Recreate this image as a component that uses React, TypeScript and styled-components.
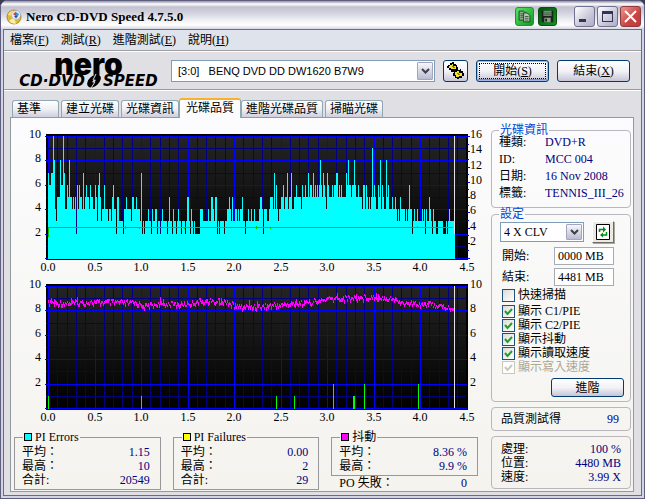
import React, { useState } from "react";

import styled, { createGlobalStyle, css } from "styled-components";

// one hex digit per plot column, keyed by the column each run starts at
const PI_ERRORS: [number, string][] = [
  [0, "76677A843555866A744658554"],
  [25, "545264655474565546554465367534464443443564425533332445444435544544437"],
  [94, "2323334332433442"],
  [110, "332343333235"],
  [122, "33243323433233323"],
  [139, "553243232"],
  [148, "222244433333433554355"],
  [169, "2323333233445435"],
  [185, "3344343445332"],
  [198, "3343343343333455424443345554"],
  [226, "746434455645574557"],
  [244, "4455655554655655756657"],
  [266, "565656865765476555656677"],
  [290, "56565555768665668655655546646545459"],
  [325, "5654465846544856444544543435444434346442"],
  [365, "34334333343424335432433223333322232343333"],
];

const PI_FAILURES = [
  { x: 37, value: 1 },
  { x: 130, value: 1 },
  { x: 265, value: 1 },
  { x: 283, value: 1 },
  { x: 322, value: 2 },
  { x: 342, value: 1 },
  { x: 343, value: 1 },
  { x: 353, value: 2 },
  { x: 407, value: 2 },
];

// [column, height in plot pixels], interpolated between the entries
const JITTER_LEVELS = [
  [0, 30], [20, 30], [60, 29], [90, 30], [97, 33], [110, 31], [140, 31], [150, 28], [180, 29], [187, 34],
  [215, 33], [240, 31], [265, 29], [280, 26], [300, 25], [325, 24], [342, 25], [355, 30], [380, 31],
  [395, 34], [410, 37],
];

const LEFT = 37;
const TOP = 13;
const BOTTOM = 135;
const COLUMNS = 407;

const jitterAt = (x: number) => {
  const next = JITTER_LEVELS.findIndex(([px]) => px >= x);
  if (next <= 0) return JITTER_LEVELS[0][1];
  const [x0, y0] = JITTER_LEVELS[next - 1];
  const [x1, y1] = JITTER_LEVELS[next];
  return y0 + ((y1 - y0) * (x - x0)) / (x1 - x0);
};

const noise = (n: number) => {
  const v = Math.sin(n * 12.9898) * 43758.5453;
  return v - Math.floor(v);
};

const xAt = (v: number) => LEFT + Math.round(v * 93);
const yAt = (v: number) => Math.round(BOTTOM - v * 12.2);

const errorsPath = () => {
  const values: string[] = new Array(COLUMNS).fill("3");
  PI_ERRORS.forEach(([start, run]) => {
    run.split("").forEach((digit, i) => {
      if (start + i < COLUMNS) values[start + i] = digit;
    });
  });
  const bars = values.map((digit, i) => `V${yAt(parseInt(digit, 16))}H${LEFT + i + 1}`);
  return `M${LEFT} ${BOTTOM + 1}${bars.join("")}V${BOTTOM + 1}Z`;
};

const jitterPath = () => {
  let d = "";
  for (let i = 0; i < COLUMNS; i++) {
    const spike = noise(i + 7) > 0.95 ? 4 : 0;
    const y = Math.round(jitterAt(i) - 1 + (noise(i) - 0.5) * 5) - spike;
    const height = 2 + Math.floor(noise(i + 500) * 3) + spike;
    d += `M${LEFT + i} ${y}h1v${height}h-1z`;
  }
  return d;
};

const PlotGrid = ({ id }: { id: string }) => (
  <>
    <defs>
      <linearGradient id={id} x1="0" y1="0" x2="0" y2="1">
        <stop offset="0" stopColor="#242424" />
        <stop offset="1" stopColor="#000" />
      </linearGradient>
    </defs>
    <rect x={35} y={11} width={422} height={126} fill="#000" />
    <rect x={37} y={14} width={418} height={121} fill={`url(#${id})`} />
    {Array.from({ length: 45 }, (_, i) => (
      <rect key={i} x={xAt(i / 10)} y={TOP} width={1} height={122} fill={i % 5 ? "#000080" : "#0000ff"} />
    ))}
    {Array.from({ length: 11 }, (_, i) => (
      <rect key={i} x={i % 2 ? 35 : 34} y={yAt(i)} width={i % 2 ? 420 : 422} height={1} fill={i % 2 ? "#000080" : "#0000ff"} />
    ))}
  </>
);

const AxisLabels = ({ rightMax }: { rightMax: number }) => (
  <g>
    {[2, 4, 6, 8, 10].map((v) => (
      <text key={v} x={30} y={yAt(v) + 2} textAnchor="end">{v}</text>
    ))}
    {Array.from({ length: rightMax / 2 }, (_, i) => (i + 1) * 2).map((v) => (
      <text key={v} x={459} y={yAt((v * 10) / rightMax) + 2}>{v}</text>
    ))}
    {Array.from({ length: 10 }, (_, i) => i / 2).map((v) => (
      <text key={v} x={xAt(v)} y={148} textAnchor="middle">{v.toFixed(1)}</text>
    ))}
  </g>
);

const ErrorsChart = () => (
  <Chart viewBox="0 0 476 150" role="img" aria-label="PI Errors">
    <PlotGrid id="errors-bg" />
    <path d={errorsPath()} fill="#00ffff" />
    {Array.from({ length: 17 }, (_, i) => (
      <rect key={i} x={456} y={Math.round(BOTTOM - i * 7.625)} width={i % 2 ? 2 : 3} height={1} fill="#0000ff" />
    ))}
    <path d="M37 104h405v1h-405zM37 104h1v10h-1zM114 103h1v3h-1zM128 104h1v2h-1zM173 104h1v2h-1zM245 103h1v3h-1zM259 104h1v2h-1zM406 103h1v2h-1z" fill="#00c800" />
    <rect x={443} y={13} width={1} height={98} fill="#e0dfe3" />
    <AxisLabels rightMax={16} />
  </Chart>
);

const JitterChart = () => (
  <Chart viewBox="0 0 476 150" role="img" aria-label="抖動">
    <PlotGrid id="jitter-bg" />
    {PI_FAILURES.map(({ x, value }) => (
      <rect key={x} x={x} y={yAt(value)} width={1} height={BOTTOM - yAt(value) + 1} fill="#00ff00" />
    ))}
    <path d={jitterPath()} fill="#ff00ff" />
    <rect x={443} y={13} width={1} height={122} fill="#e0dfe3" />
    <AxisLabels rightMax={10} />
  </Chart>
);

const DiscIcon = () => (
  <svg width="16" height="16" viewBox="0 0 16 16" aria-hidden="true">
    <circle cx="8" cy="8" r="7" fill="#dcbb3c" stroke="#a98a20" />
    <path d="M2 6a7 7 0 0 1 5-4.500l2 6z" fill="#f3e08a" />
    <path d="M3 12a7 7 0 0 0 7 2.500l-2-6z" fill="#fbeeaa" />
    <circle cx="10" cy="6" r="4.500" fill="#e6edf6" stroke="#9aa4b4" strokeWidth=".5" />
    <path d="M7 5l3-2.500V6H8z" fill="#d84032" />
    <path d="M10 3l3 2-1 2-2-1z" fill="#3d8fd8" />
    <path d="M8 7l2-1 2 1-2 2.500z" fill="#2a4fae" />
  </svg>
);

const CopyIcon = () => (
  <svg width="19" height="19" viewBox="0 0 19 19" aria-hidden="true">
    <path d="M3.500 3.500h5l2 2v8h-7z" fill="#8fae93" stroke="#173f1b" />
    <path d="M8.500 5.500h4l3 3v7h-7z" fill="#b4c4b5" stroke="#173f1b" />
    <path d="M5 6.500h3M5 8.500h3M5 10.500h3M10 9.500h4M10 11.500h4M10 13.500h4" stroke="#3b5a3e" />
  </svg>
);

const SaveIcon = () => (
  <svg width="19" height="19" viewBox="0 0 19 19" aria-hidden="true">
    <path d="M3 3h13v13H4l-1-1z" fill="#1d221d" />
    <path d="M5 3h9v6H5z" fill="#719173" />
    <path d="M6 11h7v5H6z" fill="#8ba38d" />
    <path d="M7 12h2v3H7z" fill="#1d221d" />
    <path d="M5 5.500h9M5 7.500h9" stroke="#456048" />
  </svg>
);

const OptionsIcon = () => (
  <svg width="17" height="17" viewBox="0 0 17 17" shapeRendering="crispEdges" aria-hidden="true">
    <path d="M1 3h2V1h2V0h2v2h2v1h1v2h1v3H9v2H4V8H2V6H0V4h1z" fill="#000" />
    <path d="M3 3h2V2h1v2h3v3H4V6H2V4h1z" fill="#f4e623" />
    <path d="M7 9h2V7h2v1h2V7h1v2h2v2h1v3h-2v2h-3v1h-2v-1H8v-2H6v-3h1z" fill="#000" />
    <path d="M8 10h2V9h2v2h3v3h-3v1H9v-2H8z" fill="#f4e623" />
    <path d="M5 4h2v1h1v1H6V5H5zM10 11h2v1h1v1h-2v-1h-1z" fill="#877a00" />
  </svg>
);

const RefreshIcon = () => (
  <svg width="14" height="16" viewBox="0 0 14 16" aria-hidden="true">
    <path d="M.5.500h13v15H.5z" fill="#fff" stroke="#000" />
    <path d="M3.500 8V5.500h4M10.500 8v3h-4" fill="none" stroke="#008a16" strokeWidth="1.500" />
    <path d="M7 2.500l3 3-3 3zM7 8.500l-3 2.500 3 2.500z" fill="#008a16" />
  </svg>
);

const LogoDisc = () => (
  <svg width="18" height="14" viewBox="0 0 18 14" aria-hidden="true">
    <ellipse cx="9" cy="7" rx="8" ry="5" transform="rotate(-42 9 7)" fill="#000" />
    <ellipse cx="9" cy="7" rx="2" ry="1" transform="rotate(-42 9 7)" fill="#e0dfe3" />
    <path d="M11 0L8 6M10 8l-4 6" stroke="#e0dfe3" />
  </svg>
);

const Arrow = () => (
  <svg width="9" height="6" viewBox="0 0 9 6" aria-hidden="true">
    <path d="M1 1l3.500 3.500L8 1" fill="none" stroke="#3a3f4c" strokeWidth="2" />
  </svg>
);

const MENU = [
  ["檔案", "F"],
  ["測試", "R"],
  ["進階測試", "E"],
  ["說明", "H"],
];

const TABS = ["基準", "建立光碟", "光碟資訊", "光碟品質", "進階光碟品質", "掃瞄光碟"];

const DISC_INFO = [
  ["種類:", "DVD+R"],
  ["ID:", "MCC 004"],
  ["日期:", "16 Nov 2008"],
  ["標籤:", "TENNIS_III_26"],
];

const OPTIONS = [
  { label: "快速掃描", checked: false },
  { label: "顯示 C1/PIE", checked: true },
  { label: "顯示 C2/PIE", checked: true },
  { label: "顯示抖動", checked: true },
  { label: "顯示讀取速度", checked: true },
  { label: "顯示寫入速度", checked: true, disabled: true },
];

const STATS = [
  { title: "PI Errors", color: "#00ffff", rows: [["平均：", "1.15"], ["最高：", "10"], ["合計:", "20549"]] },
  { title: "PI Failures", color: "#ffff00", rows: [["平均：", "0.00"], ["最高：", "2"], ["合計:", "29"]] },
  { title: "抖動", color: "#ff00ff", rows: [["平均：", "8.36 %"], ["最高：", "9.9 %"]], extra: ["PO 失敗：", "0"] },
];

const PROGRESS = [
  ["處理:", "100 %"],
  ["位置:", "4480 MB"],
  ["速度:", "3.99 X"],
];

const App: React.FC = () => {
  const [tab, setTab] = useState("光碟品質");
  const [options, setOptions] = useState(OPTIONS);

  const toggle = (label: string) =>
    setOptions(options.map((o) => (o.label === label ? { ...o, checked: !o.checked } : o)));

  return (
    <Window>
      <GlobalStyle />
      <TitleBar>
        <DiscIcon />
        <Title>Nero CD-DVD Speed 4.7.5.0</Title>
        <GreenButton aria-label="Copy"><CopyIcon /></GreenButton>
        <GreenButton $pressed aria-label="Save"><SaveIcon /></GreenButton>
        <WindowButtons>
          <WindowButton aria-label="Minimize">
            <svg width="19" height="19"><path d="M4 12h7v3H4z" fill="#343454" /></svg>
          </WindowButton>
          <WindowButton aria-label="Maximize">
            <svg width="19" height="19"><path d="M4 4h11v11H4zM5 7v7h9V7z" fillRule="evenodd" fill="#343454" /></svg>
          </WindowButton>
          <WindowButton $close aria-label="Close">
            <svg width="19" height="19"><path d="M4 4l11 11M15 4L4 15" stroke="#fff" strokeWidth="2" /></svg>
          </WindowButton>
        </WindowButtons>
      </TitleBar>
      <Client>
        <MenuBar>
          {MENU.map(([name, key]) => (
            <MenuItem key={name}>{name}(<u>{key}</u>)</MenuItem>
          ))}
        </MenuBar>
        <Toolbar>
          <Logo>
            <LogoName>nero</LogoName>
            <LogoProduct>CD·DVD<LogoDisc />SPEED</LogoProduct>
          </Logo>
          <Drive>
            <Select $sans aria-label="Drive">
              <option>[3:0]&nbsp;&nbsp; BENQ DVD DD DW1620 B7W9</option>
            </Select>
            <SelectArrow><Arrow /></SelectArrow>
          </Drive>
          <IconButton aria-label="Options"><OptionsIcon /></IconButton>
          <ToolButton $focused>開始(<u>S</u>)</ToolButton>
          <ToolButton>結束(<u>X</u>)</ToolButton>
        </Toolbar>
        <Tabs role="tablist">
          {TABS.map((name) => (
            <Tab key={name} role="tab" aria-selected={tab === name} $active={tab === name} onClick={() => setTab(name)}>
              {name}
            </Tab>
          ))}
        </Tabs>
        <Panel>
          <Main>
            <ErrorsChart />
            <JitterChart />
            <Stats>
              {STATS.map(({ title, color, rows, extra }) => (
                <div key={title}>
                  <StatGroup>
                    <StatLegend><Swatch $color={color} />{title}</StatLegend>
                    {rows.map(([label, value]) => (
                      <Row key={label}><span>{label}</span><Value>{value}</Value></Row>
                    ))}
                  </StatGroup>
                  {extra && <ExtraRow><span>{extra[0]}</span><Value>{extra[1]}</Value></ExtraRow>}
                </div>
              ))}
            </Stats>
          </Main>
          <Side>
            <Group>
              <Legend>光碟資訊</Legend>
              {DISC_INFO.map(([label, value]) => (
                <InfoRow key={label}><span>{label}</span><Value>{value}</Value></InfoRow>
              ))}
            </Group>
            <SettingsGroup>
              <Legend>設定</Legend>
              <SpeedRow>
                <Speed>
                  <Select aria-label="Speed"><option>4 X CLV</option></Select>
                  <SelectArrow><Arrow /></SelectArrow>
                </Speed>
                <RefreshButton aria-label="Refresh"><RefreshIcon /></RefreshButton>
              </SpeedRow>
              <Fields>
                <Field>開始:<FieldInput defaultValue="0000 MB" /></Field>
                <Field>結束:<FieldInput defaultValue="4481 MB" /></Field>
              </Fields>
              <Options>
                {options.map(({ label, checked, disabled }) => (
                  <Option key={label} $disabled={disabled}>
                    <Checkbox type="checkbox" checked={checked} disabled={disabled} onChange={() => toggle(label)} />
                    <Tick $on={checked} width="9" height="9" viewBox="0 0 9 9">
                      <path d="M1 4l2.500 3L8 2" fill="none" stroke="currentColor" strokeWidth="2" />
                    </Tick>
                    {label}
                  </Option>
                ))}
              </Options>
              <AdvancedButton>進階</AdvancedButton>
            </SettingsGroup>
            <Box $score>
              <Row><span>品質測試得</span><Value>99</Value></Row>
            </Box>
            <Box>
              {PROGRESS.map(([label, value]) => (
                <Row key={label}><span>{label}</span><Value>{value}</Value></Row>
              ))}
            </Box>
          </Side>
        </Panel>
      </Client>
    </Window>
  );
};

export default App;

const GlobalStyle = createGlobalStyle`
  * {
    box-sizing: border-box;
  }
  body {
    margin: 0;
    background: #3c3c50;
  }
  body, button, input, select {
    font-family: "Liberation Serif", "Noto Sans CJK TC", serif;
    font-size: 12px;
    line-height: 14px;
    color: #000;
  }
`;

const Window = styled.div`
  display: flex;
  flex-direction: column;
  min-height: 100vh;
  border: 1px solid #5e5e80;
  border-radius: 7px 7px 0 0;
  background: #d3d3e2;
  overflow: hidden;
`;

const TitleBar = styled.header`
  display: flex;
  align-items: center;
  gap: 4px;
  height: 28px;
  padding: 3px 3px 0 5px;
  background: linear-gradient(#8e8ea8 0, #fff 3px, #c2c2d2 6px, #cfcfdb 11px, #f2f2f7 20px, #fff 24px, #d6d6e2 28px);
`;

const Title = styled.h1`
  flex: 1;
  margin: 0;
  font-size: 13px;
  line-height: 16px;
  font-weight: bold;
`;

const plainButton = css`
  display: flex;
  align-items: center;
  justify-content: center;
  padding: 0;
`;

const GreenButton = styled.button<{ $pressed?: boolean }>`
  ${plainButton}
  width: 19px;
  height: 19px;
  border: 1px solid ${(p) => (p.$pressed ? "#0b4d12" : "#149b24")};
  border-radius: 3px;
  background: ${(p) => (p.$pressed ? "linear-gradient(135deg, #04500d, #129422)" : "linear-gradient(135deg, #5be268, #119a20)")};
`;

const WindowButtons = styled.div`
  display: flex;
  gap: 2px;
  margin-left: 13px;
`;

const WindowButton = styled.button<{ $close?: boolean }>`
  ${plainButton}
  width: 21px;
  height: 21px;
  border: 1px solid ${(p) => (p.$close ? "#8f3a3e" : "#70708f")};
  border-radius: 3px;
  background: ${(p) => (p.$close ? "linear-gradient(135deg, #e89a90, #cc4444 60%, #b83a3e)" : "linear-gradient(135deg, #fff, #c8c8da 60%, #aeaec8)")};
`;

const Client = styled.div`
  flex: 1;
  display: flex;
  flex-direction: column;
  margin: 0 2px 2px;
  border: 1px solid #6a6a8c;
  background: #e0dfe3;
`;

const MenuBar = styled.nav`
  display: flex;
  gap: 12px;
  padding: 3px 6px;
  background: #dfe3ec;
  border-bottom: 1px solid #9d9da1;
`;

const MenuItem = styled.button`
  padding: 0;
  border: 0;
  background: none;
`;

const Toolbar = styled.div`
  display: flex;
  align-items: center;
  gap: 8px;
  height: 39px;
  padding: 0 11px 0 10px;
  border-top: 1px solid #fff;
  border-bottom: 1px solid #9d9da1;
`;

const Logo = styled.div`
  display: flex;
  flex-direction: column;
  align-items: center;
  width: 149px;
  white-space: nowrap;
`;

const LogoName = styled.div`
  font: 900 30px/20px Inter, sans-serif;
`;

const LogoProduct = styled.div`
  display: flex;
  align-items: center;
  font: italic bold 15px/14px "DejaVu Sans", sans-serif;
`;

const SelectBox = styled.div`
  display: flex;
  align-items: stretch;
  padding: 1px;
  border: 1px solid #7f9db9;
  background: #fff;
`;

const Drive = styled(SelectBox)`
  flex: 1;
  height: 22px;
`;

const Speed = styled(SelectBox)`
  width: 84px;
  height: 20px;
`;

const Select = styled.select<{ $sans?: boolean }>`
  flex: 1;
  min-width: 0;
  appearance: none;
  padding: 0 ${(p) => (p.$sans ? 5 : 2)}px;
  border: 0;
  background: none;
  ${(p) => p.$sans && css`font-family: "Liberation Sans", sans-serif; font-size: 11px;`}
`;

const SelectArrow = styled.span`
  ${plainButton}
  width: 16px;
  border: 1px solid #a4a4be;
  border-radius: 1px;
  background: linear-gradient(#f6f6fa, #bcbcd2);
  pointer-events: none;
`;

const PushButton = styled.button<{ $focused?: boolean }>`
  ${plainButton}
  border: 1px solid #003c74;
  border-radius: 3px;
  background: linear-gradient(#fff, #f2f2f7 50%, #c6c5d7);
  ${(p) =>
    p.$focused &&
    css`
      box-shadow: inset 0 0 0 1px #9fb8ee, inset 0 -2px 0 #6f8fdd;
      outline: 1px dotted #000;
      outline-offset: -4px;
    `}
`;

const IconButton = styled(PushButton)`
  width: 25px;
  height: 22px;
`;

const ToolButton = styled(PushButton)`
  width: 73px;
  height: 22px;
`;

const Tabs = styled.div`
  display: flex;
  align-items: flex-end;
  gap: 2px;
  height: 27px;
  padding: 0 8px;
  border-top: 1px solid #fff;
`;

const Tab = styled.button<{ $active: boolean }>`
  height: 17px;
  padding: 0 4px;
  border: 1px solid #91a7b4;
  border-bottom: 0;
  border-radius: 3px 3px 0 0;
  background: linear-gradient(#fff, #f0f0f5 50%, #cfcfde);
  white-space: nowrap;

  &:first-child {
    padding-right: 17px;
  }

  ${(p) =>
    p.$active &&
    css`
      height: 20px;
      margin: 0 -2px -1px;
      padding: 0 6px 2px;
      border-top: 2px solid #f9b12c;
      background: #fcfcfe;
      z-index: 1;
    `}
`;

const Panel = styled.main`
  flex: 1;
  display: flex;
  gap: 4px;
  margin: 0 7px 3px 6px;
  padding-right: 2px;
  border: 1px solid #919b9c;
  background: linear-gradient(#fcfcfe, #f4f3ee);
`;

const Main = styled.div`
  flex: 1;
  min-width: 0;
  padding-top: 5px;
`;

const Chart = styled.svg`
  display: block;
  width: 100%;
  shape-rendering: crispEdges;
`;

const Stats = styled.div`
  display: grid;
  grid-template-columns: repeat(3, minmax(0, 1fr));
  gap: 12px;
  padding: 10px 9px 0 3px;
`;

const Group = styled.fieldset`
  min-width: 0;
  margin: 0;
  padding: 0 0 5px 7px;
  border: 1px solid #b9b6bd;
  border-radius: 4px;
`;

const SettingsGroup = styled(Group)`
  display: flex;
  flex-direction: column;
  margin-top: 2px;
  padding-top: 3px;
  padding-bottom: 4px;
`;

const Legend = styled.legend`
  padding: 0 1px;
  line-height: 8px;
  color: #0046d5;
`;

const StatGroup = styled(Group)`
  padding: 4px 10px 2px 7px;
  border-color: #98989c;
  border-radius: 0;
`;

const StatLegend = styled(Legend)`
  display: flex;
  align-items: center;
  gap: 3px;
  margin-left: 1px;
  color: #000;
`;

const Swatch = styled.span<{ $color: string }>`
  width: 8px;
  height: 8px;
  border: 1px solid #000;
  background: ${(p) => p.$color};
`;

const Row = styled.div`
  display: flex;
  justify-content: space-between;
  white-space: nowrap;
`;

const ExtraRow = styled(Row)`
  padding: 0 11px 0 8px;
`;

const Value = styled.span`
  color: #000080;
`;

const Side = styled.div`
  width: 140px;
  padding-top: 8px;
`;

const InfoRow = styled.div`
  display: grid;
  grid-template-columns: 46px 1fr;
  line-height: 17px;
  white-space: nowrap;
`;

const SpeedRow = styled.div`
  display: flex;
  align-items: center;
  gap: 8px;
  margin-left: 1px;
`;

const RefreshButton = styled.button`
  ${plainButton}
  width: 22px;
  height: 22px;
  border: 1px solid;
  border-color: #fff #716f64 #716f64 #fff;
  background: #ece9e4;
  box-shadow: 1px 1px 0 #aaa79c;
`;

const Fields = styled.div`
  display: flex;
  flex-direction: column;
  gap: 3px;
  margin: 4px 16px 2px 3px;
`;

const Field = styled.label`
  display: flex;
  align-items: center;
  justify-content: space-between;
`;

const FieldInput = styled.input`
  width: 60px;
  height: 18px;
  padding: 0 3px;
  border: 1px solid #a5acb2;
  background: #fff;
`;

const Options = styled.div`
  display: flex;
  flex-direction: column;
  margin-left: 3px;
`;

const Option = styled.label<{ $disabled?: boolean }>`
  display: flex;
  align-items: center;
  position: relative;
  gap: 3px;
  height: 14px;
  color: ${(p) => (p.$disabled ? "#aca899" : "#000")};

  &:first-child {
    margin-bottom: 2px;
  }
`;

const Checkbox = styled.input`
  appearance: none;
  width: 13px;
  height: 13px;
  margin: 0;
  border: 1px solid #1c5180;
  background: linear-gradient(135deg, #dcdcd7, #fff);

  &:disabled {
    border-color: #cac8bb;
    background: #fff;
  }
`;

const Tick = styled.svg<{ $on: boolean }>`
  position: absolute;
  left: 2px;
  color: #21a121;
  visibility: ${(p) => (p.$on ? "visible" : "hidden")};
  pointer-events: none;

  :disabled + & {
    color: #cac8bb;
  }
`;

const AdvancedButton = styled(PushButton)`
  align-self: flex-end;
  width: 73px;
  height: 19px;
  margin: 4px 6px 0 0;
`;

const Box = styled.div<{ $score?: boolean }>`
  margin-top: 5px;
  padding: ${(p) => (p.$score ? "4px 11px 4px 9px" : "5px 9px 4px")};
  border: 1px solid #b9b6bd;
  border-radius: 4px;
`;
